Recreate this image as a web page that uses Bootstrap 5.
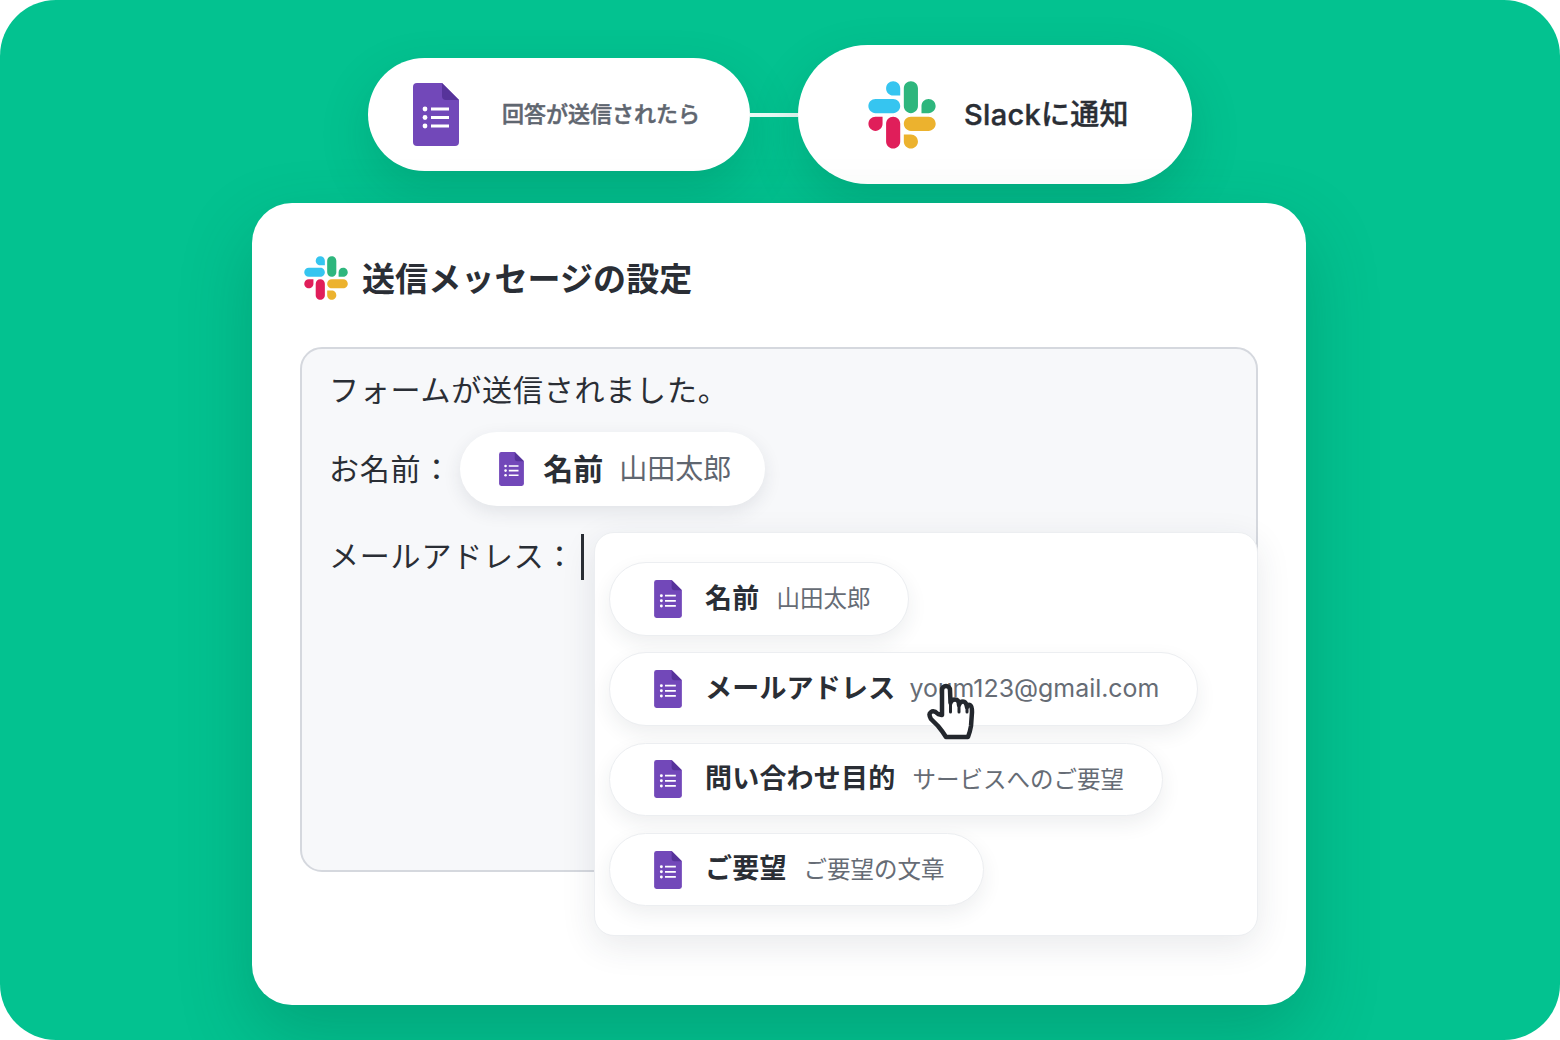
<!DOCTYPE html>
<html lang="ja">
<head>
    <meta charset="UTF-8">
    <meta name="viewport" content="width=device-width, initial-scale=1">
    <title>Slackに通知</title>
    <link rel="stylesheet" href="https://cdn.jsdelivr.net/npm/bootstrap@5.3.0/dist/css/bootstrap.min.css">
    <style>
        body { margin: 0; background: #fff; font-family: Inter, "Noto Sans CJK JP", sans-serif; color: #2a2e35; }
        .stage { width: 1560px; height: 1040px; background: #03c290; border-radius: 56px; padding-top: 45px; overflow: hidden; }
        .flow-row { height: 139px; }
        .pill-trigger { width: 382px; height: 113px; padding-left: 45px; background: #fff; border-radius: 57px; box-shadow: 0 20px 50px rgba(0, 80, 60, .2); }
        .pill-trigger svg { width: 46px; height: 63px; margin-right: 43px; }
        .pill-trigger span { font-size: 22px; font-weight: 500; color: #5f6670; -webkit-text-stroke: .5px #5f6670; }
        .pill-link { width: 48px; height: 4px; background: #e8faf5; }
        .pill-action { width: 394px; height: 139px; padding-left: 70px; background: #fff; border-radius: 70px; box-shadow: 0 20px 50px rgba(0, 80, 60, .2); }
        .pill-action svg { width: 68px; height: 68px; margin-right: 28px; }
        .pill-action span { font-size: 29px; font-weight: 500; letter-spacing: .3px; -webkit-text-stroke: .4px #2a2e35; }
        .panel { width: 1054px; height: 802px; margin-top: 19px; margin-right: 2px; padding: 48px; background: #fff; border-radius: 40px; box-shadow: 0 30px 70px rgba(0, 80, 60, .25); }
        .panel-title { height: 56px; margin-bottom: 40px; padding-left: 4px; }
        .panel-title svg { width: 44px; height: 44px; margin: 0 14px 3px 0; }
        .panel-title h1 { margin: 0; font-size: 33px; font-weight: 700; line-height: 56px; letter-spacing: .1px; }
        .editor { height: 525px; padding: 21px 27px; background: #f7f8fa; border: 2px solid #d5d8de; border-radius: 22px; }
        .editor-line { font-size: 30px; line-height: 40px; white-space: nowrap; letter-spacing: .8px; }
        .field-row { height: 74px; margin-top: 22px; }
        .mail-row { height: 46px; margin-top: 27px; }
        .caret-bar { width: 3px; height: 46px; margin: 2px 0 0 6px; background: #2a2e35; }
        .token { height: 74px; margin-left: 8px; padding: 0 34px 0 39px; background: #fff; border-radius: 37px; letter-spacing: 0; box-shadow: 0 6px 18px rgba(40, 50, 70, .1); }
        .token svg { width: 25px; height: 34px; margin-right: 19px; }
        .token b { font-size: 30px; font-weight: 700; margin-right: 16px; }
        .token span { font-size: 28px; color: #5f6670; font-weight: 400; }
        .picker { position: absolute; left: 292px; top: 183px; width: 664px; height: 404px; padding: 29px 14px; background: #fff; border: 1px solid #eceef1; border-radius: 20px; box-shadow: 0 10px 34px rgba(40, 50, 70, .1); }
        .pick-list { gap: 16.830px; }
        .pick-item { height: 73.500px; padding: 0 38px 0 44px; background: #fff; border: 1px solid #eceef1; border-radius: 37px; box-shadow: 0 8px 20px rgba(40, 50, 70, .08); }
        .pick-item svg { width: 28px; height: 38px; margin-right: 23px; }
        .pick-item b { font-size: 27px; font-weight: 700; margin-right: 17px; white-space: nowrap; letter-spacing: .2px; }
        .pick-item span { font-size: 23.500px; color: #666c75; white-space: nowrap; }
        .pick-item span.mail-val { font-size: 24.900px; margin-left: -3px; }
        .hand { position: absolute; left: 925px; top: 681px; width: 50px; height: 62px; }
        .stage-wrap { position: relative; }
    </style>
</head>
<body>
    <svg width="0" height="0" class="d-block position-absolute">
        <defs>
            <symbol id="forms-icon" viewBox="0 0 46 63">
                <path d="M4 0H29L46 17V59a4 4 0 0 1-4 4H4a4 4 0 0 1-4-4V4a4 4 0 0 1 4-4z" fill="#7248b9"/>
                <path d="M29 0L46 17H33a4 4 0 0 1-4-4z" fill="#56339a"/>
                <circle cx="12" cy="26" r="2.400" fill="#fff"/>
                <circle cx="12" cy="34.500" r="2.400" fill="#fff"/>
                <circle cx="12" cy="43" r="2.400" fill="#fff"/>
                <path d="M18 24.500h18v3H18zM18 33h18v3H18zM18 41.500h18v3H18z" fill="#fff"/>
            </symbol>
            <symbol id="slack-icon" viewBox="0 0 127 127">
                <path d="M27.200 80c0 7.300-5.900 13.200-13.200 13.200C6.700 93.200.800 87.300.800 80c0-7.300 5.900-13.200 13.200-13.200h13.200V80zm6.600 0c0-7.300 5.900-13.200 13.200-13.200 7.300 0 13.200 5.900 13.200 13.200v33c0 7.300-5.900 13.200-13.200 13.200-7.300 0-13.200-5.900-13.200-13.200V80z" fill="#e01e5a"/>
                <path d="M47 27c-7.300 0-13.200-5.900-13.200-13.200C33.800 6.500 39.700.600 47 .600c7.300 0 13.200 5.900 13.200 13.200V27H47zm0 6.700c7.300 0 13.200 5.900 13.200 13.200 0 7.300-5.900 13.200-13.200 13.200H13.900C6.600 60.100.700 54.200.700 46.900c0-7.300 5.900-13.200 13.200-13.200H47z" fill="#36c5f0"/>
                <path d="M99.900 46.900c0-7.300 5.900-13.200 13.200-13.200 7.300 0 13.200 5.900 13.200 13.200 0 7.300-5.900 13.200-13.200 13.200H99.900V46.900zm-6.600 0c0 7.300-5.900 13.200-13.200 13.200-7.300 0-13.200-5.900-13.200-13.200V13.800C66.900 6.500 72.800.600 80.100.600c7.300 0 13.200 5.900 13.200 13.200v33.100z" fill="#2eb67d"/>
                <path d="M80.100 99.800c7.300 0 13.200 5.900 13.200 13.200 0 7.300-5.900 13.200-13.200 13.200-7.300 0-13.200-5.900-13.200-13.200V99.800h13.200zm0-6.600c-7.300 0-13.200-5.900-13.200-13.200 0-7.300 5.900-13.200 13.200-13.200h33.100c7.300 0 13.200 5.900 13.200 13.200 0 7.300-5.900 13.200-13.200 13.200H80.100z" fill="#ecb22e"/>
            </symbol>
        </defs>
    </svg>

    <div class="stage-wrap">
        <div class="stage d-flex flex-column align-items-center">
            <div class="flow-row d-flex align-items-center">
                <div class="pill-trigger d-flex align-items-center">
                    <svg><use href="#forms-icon"/></svg>
                    <span>回答が送信されたら</span>
                </div>
                <div class="pill-link"></div>
                <div class="pill-action d-flex align-items-center">
                    <svg><use href="#slack-icon"/></svg>
                    <span>Slackに通知</span>
                </div>
            </div>

            <div class="panel">
                <div class="panel-title d-flex align-items-center">
                    <svg><use href="#slack-icon"/></svg>
                    <h1>送信メッセージの設定</h1>
                </div>
                <div class="editor position-relative">
                    <div class="editor-line">フォームが送信されました。</div>
                    <div class="editor-line field-row d-flex align-items-center">
                        お名前：
                        <div class="token d-flex align-items-center">
                            <svg><use href="#forms-icon"/></svg>
                            <b>名前</b>
                            <span>山田太郎</span>
                        </div>
                    </div>
                    <div class="editor-line mail-row d-flex align-items-center">
                        メールアドレス：<div class="caret-bar"></div>
                    </div>

                    <div class="picker">
                        <div class="pick-list d-flex flex-column align-items-start">
                            <div class="pick-item d-flex align-items-center">
                                <svg><use href="#forms-icon"/></svg>
                                <b>名前</b><span>山田太郎</span>
                            </div>
                            <div class="pick-item d-flex align-items-center">
                                <svg><use href="#forms-icon"/></svg>
                                <b>メールアドレス</b><span class="mail-val">youm123@gmail.com</span>
                            </div>
                            <div class="pick-item d-flex align-items-center">
                                <svg><use href="#forms-icon"/></svg>
                                <b>問い合わせ目的</b><span>サービスへのご要望</span>
                            </div>
                            <div class="pick-item d-flex align-items-center">
                                <svg><use href="#forms-icon"/></svg>
                                <b>ご要望</b><span>ご要望の文章</span>
                            </div>
                        </div>
                    </div>
                </div>
            </div>
        </div>

        <svg class="hand" viewBox="0 0 50 62">
            <path d="M17 34V9a4 4 0 0 1 8 0L25.500 22Q26 18.500 30 18.500T34 24Q35 20.500 38 20.500T42 26Q43 23 45 24T47 31L46 45Q45 51 43 56H21Q18 51 13 45L6 38Q3 33 6 31T13 33Z" fill="#fff" stroke="#23272d" stroke-width="4.500" stroke-linejoin="round"/>
            <path d="M25.500 22V31M34 24V31M42 26V31" fill="none" stroke="#23272d" stroke-width="3" stroke-linecap="round"/>
        </svg>
    </div>
</body>
</html>
